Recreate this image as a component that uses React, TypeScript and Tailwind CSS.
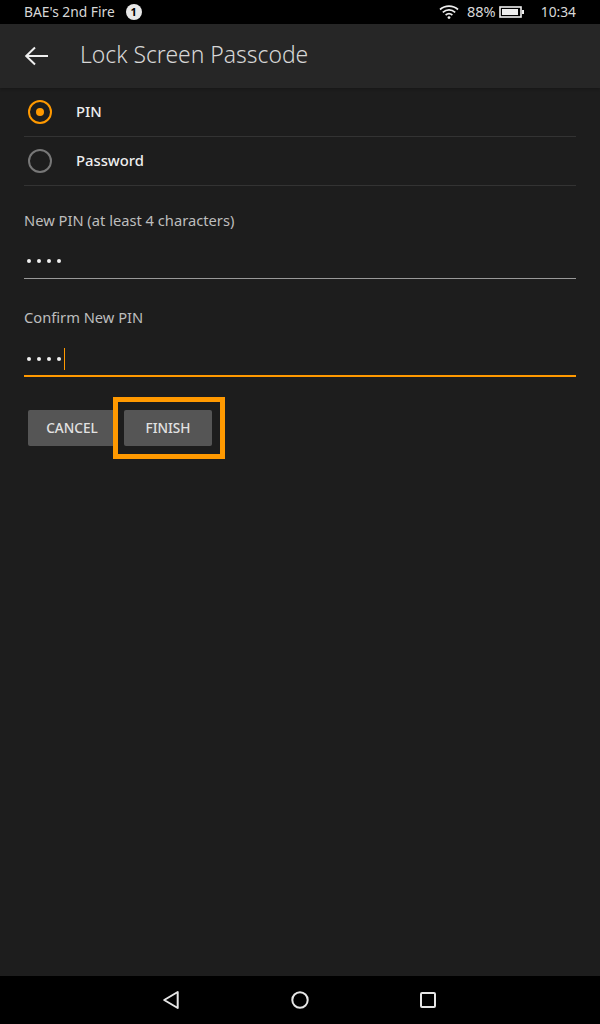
import React from "react";

const Dots = () => (
  <div className="flex items-center gap-[6px] pl-[3px]">
    {[0, 1, 2, 3].map((i) => (
      <span key={i} className="w-[4px] h-[4px] rounded-full bg-[#eeeeee]" />
    ))}
  </div>
);

export default function App() {
  return (
    <div className="w-[600px] h-[1024px] flex flex-col bg-[#1d1d1d] overflow-hidden" style={{ fontFamily: '"Noto Sans", sans-serif' }}>
      {/* status bar */}
      <div className="h-[24px] bg-black flex items-center pl-[24px] pr-[24px] text-[#d8d8d8] text-[13.8px] shrink-0">
        <span>BAE's 2nd Fire</span>
        <span className="ml-[11px] w-[16px] h-[16px] rounded-full bg-[#e8e8e8] text-black text-[11px] font-bold flex items-center justify-center">1</span>
        <div className="ml-auto flex items-center">
          <svg width="20" height="16" viewBox="0 0 20 16" fill="none" stroke="#eeeeee" strokeWidth="1.7">
            <path d="M1 5.5C6 1 14 1 19 5.5" />
            <path d="M3.8 8.3C7.5 5 12.5 5 16.2 8.3" />
            <path d="M6.6 11C8.6 9.4 11.4 9.4 13.4 11" />
            <circle cx="10" cy="13.6" r="1.4" fill="#eeeeee" stroke="none" />
          </svg>
          <span className="ml-[8px] text-[14.6px]">88%</span>
          <svg className="ml-[3px]" width="26" height="14" viewBox="0 0 26 14">
            <rect x="1" y="2" width="21" height="10" fill="none" stroke="#eeeeee" strokeWidth="1.6" />
            <rect x="3" y="4" width="16" height="6" fill="#eeeeee" />
            <rect x="23" y="5" width="2" height="4" fill="#eeeeee" />
          </svg>
          <span className="ml-[16px]">10:34</span>
        </div>
      </div>
      {/* header */}
      <div className="h-[64px] bg-[#262626] flex items-center pl-[24px] shrink-0 shadow-[0_1px_3px_rgba(0,0,0,0.25)]">
        <svg width="24" height="24" viewBox="0 0 24 24" fill="none" stroke="#eeeeee" strokeWidth="2">
          <path d="M24 12H2" />
          <path d="M11 3.5L2.2 12L11 20.5" />
        </svg>
        <h1 className="ml-[32px] mt-[-2px] text-[22.9px] font-light text-[#d6d6d6]">Lock Screen Passcode</h1>
      </div>
      {/* content */}
      <div className="flex-1 px-[24px] flex flex-col">
        <div className="h-[49px] flex items-center border-b border-[#333333] text-[#eeeeee] text-[14.8px] font-medium">
          <span className="ml-[4px] w-[24px] h-[24px] rounded-full border-2 border-[#ff9900] flex items-center justify-center">
            <span className="w-[8px] h-[8px] rounded-full bg-[#ff9900]" />
          </span>
          <span className="ml-[24px] mt-[-2px]">PIN</span>
        </div>
        <div className="h-[49px] flex items-center border-b border-[#333333] text-[#eeeeee] text-[14.8px] font-medium">
          <span className="ml-[4px] w-[24px] h-[24px] rounded-full border-2 border-[#777777]" />
          <span className="ml-[24px] mt-[-2px]">Password</span>
        </div>
        <div className="mt-[24px] text-[14.7px] leading-[20px] text-[#bdbdbd]">New PIN (at least 4 characters)</div>
        <div className="mt-[10px] h-[39px] border-b border-[#999999] flex items-end pb-[6px]">
          <div className="h-[22px] flex items-center">
            <Dots />
          </div>
        </div>
        <div className="mt-[28px] text-[14.7px] leading-[20px] text-[#bdbdbd]">Confirm New PIN</div>
        <div className="mt-[10px] h-[40px] border-b-2 border-[#ff9900] flex items-end pb-[5px]">
          <div className="h-[22px] flex items-center">
            <Dots />
            <span className="ml-[3px] w-px h-[22px] bg-[#ff9900]" />
          </div>
        </div>
        <div className="mt-[33px] ml-[4px] flex gap-[8px]">
          <button className="w-[88px] h-[36px] rounded-[2px] bg-[#555555] text-[#e2e2e2] text-[13.6px] font-medium">CANCEL</button>
          <div className="relative">
            <button className="w-[88px] h-[36px] rounded-[2px] bg-[#555555] text-[#e2e2e2] text-[13.6px] font-medium">FINISH</button>
            <div className="absolute left-[-11px] top-[-13px] w-[112px] h-[62px] border-[5px] border-[#ff9900]" />
          </div>
        </div>
      </div>
      {/* nav */}
      <div className="h-[48px] bg-black flex items-center justify-center shrink-0">
        <svg className="ml-[-2px]" width="20" height="20" viewBox="0 0 20 20" fill="none" stroke="#e6e6e6" strokeWidth="2" strokeLinejoin="round">
          <path d="M16.7 2V18L3.2 10Z" />
        </svg>
        <svg className="ml-[109px]" width="20" height="20" viewBox="0 0 20 20" fill="none" stroke="#e6e6e6" strokeWidth="2">
          <circle cx="10" cy="10" r="7.7" />
        </svg>
        <svg className="ml-[108px]" width="20" height="20" viewBox="0 0 20 20" fill="none" stroke="#e6e6e6" strokeWidth="2">
          <rect x="3" y="3" width="14" height="14" rx="1" />
        </svg>
      </div>
    </div>
  );
}
